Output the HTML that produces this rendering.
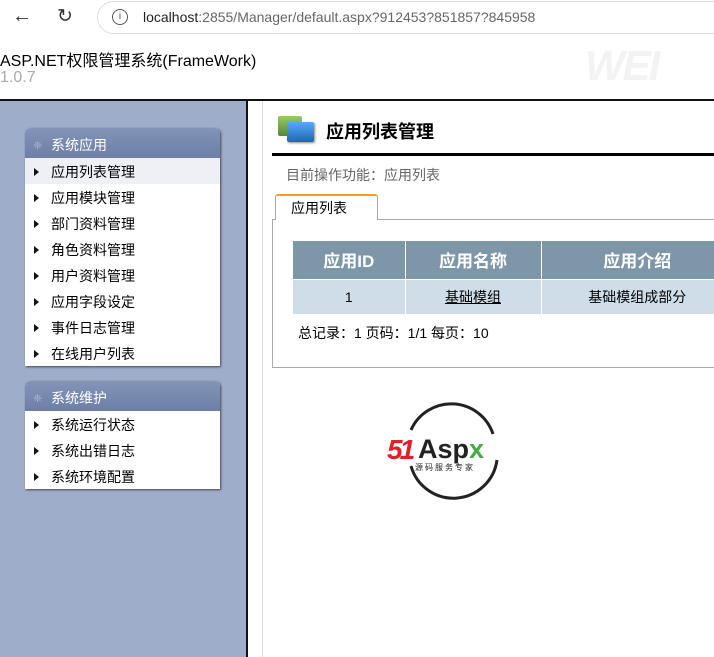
<!DOCTYPE html>
<html><head><meta charset="utf-8"><style>
*{margin:0;padding:0;box-sizing:border-box}
body{width:714px;height:657px;overflow:hidden;background:#fff;font-family:"Liberation Sans","Noto Sans CJK SC",sans-serif;position:relative;font-size:14px;color:#000}
.abs{position:absolute}
.bar{left:0;top:0;width:714px;height:38px;background:#fff}
.pill{left:97px;top:1px;width:640px;height:33px;border:1px solid #ddd;border-radius:17px;background:#fff}
.url{left:143px;top:9px;font-size:14px;color:#222;white-space:nowrap}
.url span{color:#666}
.side{left:0;top:99px;width:248px;height:558px;background:#9eadca;border-right:2px solid #111;border-top:2px solid #111}
.topline{left:0;top:99px;width:714px;height:2px;background:#111}
.vline{left:262px;top:101px;width:1px;height:556px;background:#ddd}
.box{left:25px;width:195px;background:#fff;border-radius:5px 5px 0 0;box-shadow:1px 1px 2px #445}
.box .h{height:30px;background:linear-gradient(#8394b8,#6d7fa6);border-radius:5px 5px 0 0;color:#fff;padding-left:26px;line-height:34px;font-size:14px;position:relative}
.box .h:before{content:"❈";position:absolute;left:8px;top:1px;color:#a9b4cc;font-size:11px}
.box .i{height:26px;line-height:28px;padding-left:26px;font-size:14px;position:relative}
.box .i:before{content:"";position:absolute;left:9px;top:10px;border-left:5px solid #111;border-top:4px solid transparent;border-bottom:4px solid transparent}
.box .i.sel{background:#eef0f6}
</style></head><body>
<div class="abs bar"></div>
<div class="abs" style="left:12px;top:5px;font-size:20px;color:#333">←</div>
<div class="abs" style="left:57px;top:5px;font-size:19px;color:#333">↻</div>
<div class="abs pill"></div>
<div class="abs" style="left:112px;top:9px;width:16px;height:16px;border:1.5px solid #555;border-radius:50%;font-size:10px;text-align:center;line-height:13px;color:#555">i</div>
<div class="abs url">localhost<span>:2855/Manager/default.aspx?912453?851857?845958</span></div>
<div class="abs" style="left:585px;top:42px;font-size:42px;font-weight:bold;font-style:italic;color:#f3f3f3;letter-spacing:-2px">WEI</div>
<div class="abs" style="left:0;top:47px;font-size:16px;white-space:nowrap">ASP.NET权限管理系统(FrameWork)</div>
<div class="abs" style="left:0;top:69px;font-size:16px;color:#aaa">1.0.7</div>
<div class="abs side"></div>
<div class="abs topline"></div>
<div class="abs vline"></div>
<div class="abs box" style="top:128px">
<div class="h">系统应用</div>
<div class="i sel">应用列表管理</div><div class="i">应用模块管理</div><div class="i">部门资料管理</div><div class="i">角色资料管理</div><div class="i">用户资料管理</div><div class="i">应用字段设定</div><div class="i">事件日志管理</div><div class="i">在线用户列表</div>
</div>
<div class="abs box" style="top:381px">
<div class="h">系统维护</div>
<div class="i">系统运行状态</div><div class="i">系统出错日志</div><div class="i">系统环境配置</div>
</div>
<div class="abs" style="left:278px;top:116px;width:24px;height:20px;background:linear-gradient(#9c6,#583);border-radius:2px"></div>
<div class="abs" style="left:287px;top:122px;width:27px;height:20px;background:linear-gradient(#5af,#26a);border-radius:2px;box-shadow:1px 1px 2px #888"></div>
<div class="abs" style="left:326px;top:118px;font-size:18px;font-weight:bold">应用列表管理</div>
<div class="abs" style="left:272px;top:153px;width:442px;height:3px;background:#000"></div>
<div class="abs" style="left:286px;top:165px;font-size:14px;color:#666">目前操作功能：应用列表</div>
<div class="abs" style="left:272px;top:219px;width:450px;height:149px;border:1px solid #aaa"></div>
<div class="abs" style="left:275px;top:194px;width:103px;height:26px;background:#fff;border:1px solid #aaa;border-top:2px solid #f0a020;border-bottom:none;border-radius:3px 3px 0 0;padding-left:15px;line-height:24px;font-size:14px">应用列表</div>
<table class="abs" style="left:293px;top:241px;border-collapse:collapse;width:440px">
<tr style="background:#7d97a8;color:#fff;height:38px;font-size:17px"><th style="width:112px;border-right:1px solid #fff">应用ID</th><th style="width:136px;border-right:1px solid #fff">应用名称</th><th>应用介绍</th></tr>
<tr style="background:#cfdde8;height:35px;font-size:14px;text-align:center"><td style="border-right:1px solid #fff;border-top:1px solid #fff">1</td><td style="border-right:1px solid #fff;border-top:1px solid #fff;text-decoration:underline">基础模组</td><td style="border-top:1px solid #fff">基础模组成部分</td></tr>
</table>
<div class="abs" style="left:298px;top:323px;font-size:14px">总记录：1 页码：1/1 每页：10</div>
<svg class="abs" style="left:385px;top:400px" width="130" height="100" viewBox="0 0 130 100">
<path d="M26 30 A44 44 0 0 1 108 34" fill="none" stroke="#222" stroke-width="3"/>
<path d="M112 60 A44 44 0 0 1 26 66" fill="none" stroke="#222" stroke-width="3"/>
<text x="2" y="59" font-family="Liberation Sans" font-weight="bold" font-style="italic" font-size="28" fill="#e0202a" letter-spacing="-3">51</text>
<text x="33" y="58" font-family="Liberation Sans" font-weight="bold" font-size="27" fill="#222">Asp</text>
<text x="84" y="58" font-family="Liberation Sans" font-weight="bold" font-size="27" fill="#4a4">x</text>
<text x="30" y="70" font-family="Noto Sans CJK SC" font-size="8" fill="#222" letter-spacing="2">源码服务专家</text>
</svg>
</body></html>
